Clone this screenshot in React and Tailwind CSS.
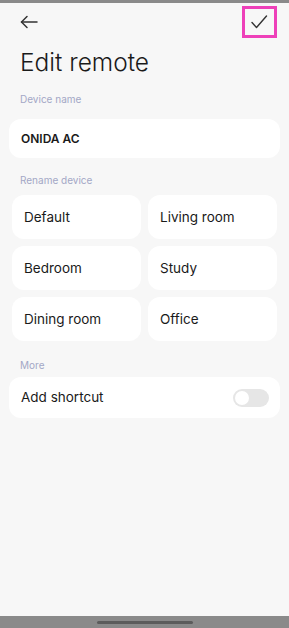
import React, { useState } from 'react';

const rooms = ['Default', 'Living room', 'Bedroom', 'Study', 'Dining room', 'Office'];

const Label = ({ children, className = '' }) => (
  <div className={`px-[20px] text-[10px] leading-[14px] text-[#a3a7c6] ${className}`}>{children}</div>
);

export default function App() {
  const [shortcut, setShortcut] = useState(false);

  return (
    <div
      className="flex h-screen w-full flex-col bg-[#f7f7f7] text-[#1a1a1a]"
      style={{ fontFamily: 'Inter, "Noto Sans", sans-serif' }}
    >
      <div className="h-[3px] bg-[#8a8a8a]" />

      {/* Header */}
      <div className="flex items-center justify-between pl-[20px] pr-[12px] pt-[3px]">
        <button className="flex h-[32px] items-center">
          <svg width="18" height="14" viewBox="0 0 18 14" fill="none" stroke="#333" strokeWidth="1.5" strokeLinecap="round" strokeLinejoin="round">
            <path d="M17 7H1.5" />
            <path d="M7 1.5 1.5 7 7 12.5" />
          </svg>
        </button>
        <button className="flex h-[32px] w-[35px] items-center justify-center border-[3px] border-[#ee40b9]">
          <svg width="17" height="14" viewBox="0 0 17 14" fill="none" stroke="#333" strokeWidth="1.4" strokeLinecap="round" strokeLinejoin="round">
            <path d="M1 7.5 5.5 12.5 15.5 1" />
          </svg>
        </button>
      </div>

      <h1 className="mt-[9px] px-[20px] text-[24.5px] leading-[30px] font-light">Edit remote</h1>

      <Label className="mt-[15px]">Device name</Label>
      <div className="mx-[9px] mt-[13px] flex h-[39px] items-center rounded-[12px] bg-white px-[12px] text-[12px] font-semibold">
        ONIDA AC
      </div>

      <Label className="mt-[15px]">Rename device</Label>
      <div className="mx-[12px] mt-[8px] grid grid-cols-2 gap-[7px]">
        {rooms.map((r) => (
          <button key={r} className="flex h-[44px] items-center rounded-[12px] bg-white px-[12px] text-left text-[13.5px]">
            {r}
          </button>
        ))}
      </div>

      <Label className="mt-[17px]">More</Label>
      <div className="mx-[9px] mt-[5px] flex h-[41px] items-center justify-between rounded-[12px] bg-white pl-[12px] pr-[11px]">
        <span className="text-[13.5px]">Add shortcut</span>
        <button
          onClick={() => setShortcut(!shortcut)}
          className={`flex h-[18px] w-[36px] items-center rounded-full px-[2px] ${shortcut ? 'justify-end bg-[#3b82f6]' : 'bg-[#e6e6e6]'}`}
        >
          <span className="h-[14px] w-[14px] rounded-full bg-white" />
        </button>
      </div>

      <div className="mt-auto flex h-[12px] items-center justify-center bg-[#8a8a8a]">
        <div className="h-[3px] w-[96px] rounded-full bg-[#5c5c5c]" />
      </div>
    </div>
  );
}
